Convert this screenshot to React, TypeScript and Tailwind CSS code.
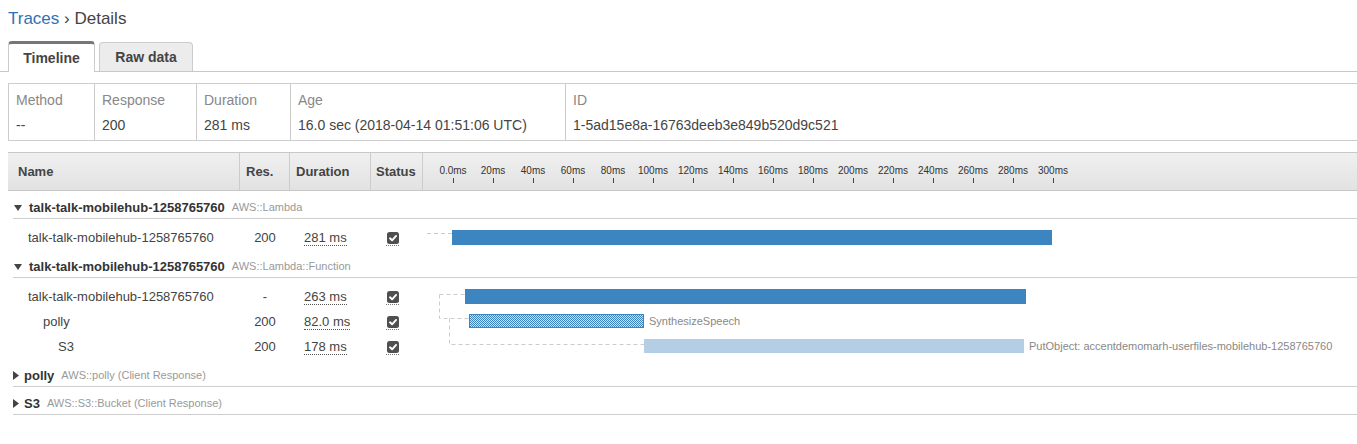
import React from "react";

type Bar = { left: number; width: number; kind: "solid" | "hatch" | "light"; label?: string };
type Row = { name: string; depth: number; res: string; dur: string; bar: Bar };
type Group = { title: string; sub: string; open: boolean; rows: Row[]; paths?: string[] };

const groups: Group[] = [
  {
    title: "talk-talk-mobilehub-1258765760",
    sub: "AWS::Lambda",
    open: true,
    rows: [
      { name: "talk-talk-mobilehub-1258765760", depth: 0, res: "200", dur: "281 ms", bar: { left: 29, width: 600, kind: "solid" } },
    ],
    paths: ["M4 14.5 H29"],
  },
  {
    title: "talk-talk-mobilehub-1258765760",
    sub: "AWS::Lambda::Function",
    open: true,
    rows: [
      { name: "talk-talk-mobilehub-1258765760", depth: 0, res: "-", dur: "263 ms", bar: { left: 42, width: 561, kind: "solid" } },
      { name: "polly", depth: 1, res: "200", dur: "82.0 ms", bar: { left: 46, width: 175, kind: "hatch", label: "SynthesizeSpeech" } },
      { name: "S3", depth: 2, res: "200", dur: "178 ms", bar: { left: 221, width: 380, kind: "light", label: "PutObject: accentdemomarh-userfiles-mobilehub-1258765760" } },
    ],
    paths: ["M16.5 16.5 H42", "M16.5 16.5 V40.5 H46", "M26.5 40.5 V66.5 H221"],
  },
  { title: "polly", sub: "AWS::polly (Client Response)", open: false, rows: [] },
  { title: "S3", sub: "AWS::S3::Bucket (Client Response)", open: false, rows: [] },
];

const ticks = ["0.0ms", "20ms", "40ms", "60ms", "80ms", "100ms", "120ms", "140ms", "160ms", "180ms", "200ms", "220ms", "240ms", "260ms", "280ms", "300ms"];

const info = [
  { label: "Method", value: "--", w: "w-[86px]" },
  { label: "Response", value: "200", w: "w-[102px]" },
  { label: "Duration", value: "281 ms", w: "w-[94px]" },
  { label: "Age", value: "16.0 sec (2018-04-14 01:51:06 UTC)", w: "w-[275px]" },
  { label: "ID", value: "1-5ad15e8a-16763deeb3e849b520d9c521", w: "flex-1" },
];

function Check() {
  return (
    <span className="inline-flex flex-col items-center">
      <svg width="12" height="12" viewBox="0 0 12 12">
        <rect x="0" y="0" width="12" height="12" rx="2.5" fill="#4f4f4f" />
        <path d="M3 6.3 L5.1 8.3 L9.1 3.9" stroke="#fff" strokeWidth="1.9" fill="none" strokeLinecap="round" strokeLinejoin="round" />
      </svg>
      <span className="mt-[1px] w-[13px] border-b border-dotted border-[#777]" />
    </span>
  );
}

function TimelineBar({ bar }: { bar: Bar }) {
  const cls =
    bar.kind === "solid"
      ? "bg-[#3d85c0]"
      : bar.kind === "light"
      ? "bg-[#b4cee6]"
      : "border border-[#3d85c0] bg-[repeating-conic-gradient(#3d85c0_0%_25%,#cfe0f0_0%_50%)] bg-[length:2px_2px]";
  const h = bar.kind === "solid" ? "h-[15px]" : "h-[14px]";
  return (
    <>
      <div className={`absolute top-[5px] ${h} ${cls}`} style={{ left: bar.left, width: bar.width }} />
      {bar.label && (
        <span
          className="absolute top-0 text-[11px] leading-[24px] text-[#888] whitespace-nowrap"
          style={{ left: bar.left + bar.width + 5 }}
        >
          {bar.label}
        </span>
      )}
    </>
  );
}

function TraceRow({ row }: { row: Row }) {
  const indent = row.depth === 0 ? "pl-[15px]" : row.depth === 1 ? "pl-[30px]" : "pl-[45px]";
  return (
    <div className="flex h-[25px] items-center text-[13px] text-[#444]">
      <div className={`w-[227px] ${indent} whitespace-nowrap`}>{row.name}</div>
      <div className="w-[50px] text-center">{row.res}</div>
      <div className="w-[81px] pl-[14px]">
        <span className="border-b border-dotted border-[#555] leading-[15px] inline-block">{row.dur}</span>
      </div>
      <div className="w-[52px] pl-[15px] flex items-center pt-[2px]">
        <Check />
      </div>
      <div className="relative flex-1 h-full">
        <TimelineBar bar={row.bar} />
      </div>
    </div>
  );
}

function GroupBlock({ g }: { g: Group }) {
  return (
    <div className="pt-[6px]">
      <div className="h-[22px] border-b border-[#cfcfcf] flex items-center whitespace-nowrap">
        {g.open ? (
          <svg width="8" height="6" viewBox="0 0 8 6" className="ml-[1px] mr-[7px]">
            <path d="M0 0 H8 L4 6 Z" fill="#444" />
          </svg>
        ) : (
          <svg width="6" height="9" viewBox="0 0 6 9" className="ml-[0px] mr-[5px]">
            <path d="M0 0 L6 4.5 L0 9 Z" fill="#444" />
          </svg>
        )}
        <span className="text-[13px] font-bold text-[#333]">{g.title}</span>
        <span className="ml-[7px] text-[11px] text-[#999]">{g.sub}</span>
      </div>
      {g.rows.length > 0 && (
        <div className="relative pt-[6px]">
          {g.rows.map((r, i) => (
            <TraceRow key={i} row={r} />
          ))}
          <svg className="absolute top-0 left-[410px] pointer-events-none" width="700" height="100" viewBox="0 0 700 100">
            {g.paths?.map((d, i) => (
              <path key={i} d={d} stroke="#cccccc" strokeWidth="1" strokeDasharray="4 3" fill="none" />
            ))}
          </svg>
        </div>
      )}
    </div>
  );
}

export default function App() {
  return (
    <div className="w-[1357px] h-[444px] overflow-hidden bg-white font-['Liberation_Sans',Arial,sans-serif]">
      {/* Breadcrumb */}
      <div className="pl-[8px] pt-[9px] text-[17px] leading-[20px] text-[#444]">
        <span className="text-[#2f72b5]">Traces</span>
        <span> › Details</span>
      </div>

      {/* Tabs */}
      <div className="mt-[12px] flex items-end h-[31px] border-b border-[#c8c8c8] pl-[8px]">
        <div className="w-[87px] h-[31px] -mb-px bg-white border-x border-[#cccccc] border-t-[3px] border-t-[#777] rounded-t-[4px] flex items-center justify-center text-[14px] font-bold text-[#444]">
          Timeline
        </div>
        <div className="ml-[4px] w-[94px] h-[29px] bg-[#ececec] border border-b-0 border-[#cccccc] rounded-t-[4px] flex items-center justify-center text-[14px] font-bold text-[#444]">
          Raw data
        </div>
      </div>

      {/* Info table */}
      <div className="mt-[11px] ml-[8px] w-[1380px] h-[58px] border border-[#cccccc] flex">
        {info.map((c, i) => (
          <div key={i} className={`${c.w} ${i < info.length - 1 ? "border-r border-[#cccccc]" : ""} pl-[7px] pt-[8px] text-[14px] leading-[16px] whitespace-nowrap`}>
            <div className="text-[#888]">{c.label}</div>
            <div className="mt-[9px] text-[#444]">{c.value}</div>
          </div>
        ))}
      </div>

      {/* Trace table */}
      <div className="mt-[11px] ml-[8px] w-[1380px]">
        <div className="h-[39px] border-t border-b border-[#c8c8c8] bg-linear-to-b from-[#f0f0f0] to-[#e2e2e2] flex text-[13px] font-bold text-[#444]">
          <div className="w-[232px] border-r border-[#cccccc] pl-[10px] flex items-center">Name</div>
          <div className="w-[50px] border-r border-[#cccccc] pl-[6px] flex items-center">Res.</div>
          <div className="w-[81px] border-r border-[#cccccc] pl-[6px] flex items-center">Duration</div>
          <div className="w-[52px] border-r border-[#cccccc] pl-[5px] flex items-center">Status</div>
          <div className="flex-1 flex pl-[10px]">
            {ticks.map((t) => (
              <div key={t} className="w-[40px] flex flex-col items-center pt-[12px]">
                <span className="text-[10px] leading-[12px] font-normal text-[#333]">{t}</span>
                <span className="mt-[1px] h-[5px] w-px bg-[#444]" />
              </div>
            ))}
          </div>
        </div>
        <div className="ml-[5px]">
          {groups.map((g, i) => (
            <GroupBlock key={i} g={g} />
          ))}
        </div>
      </div>
    </div>
  );
}
